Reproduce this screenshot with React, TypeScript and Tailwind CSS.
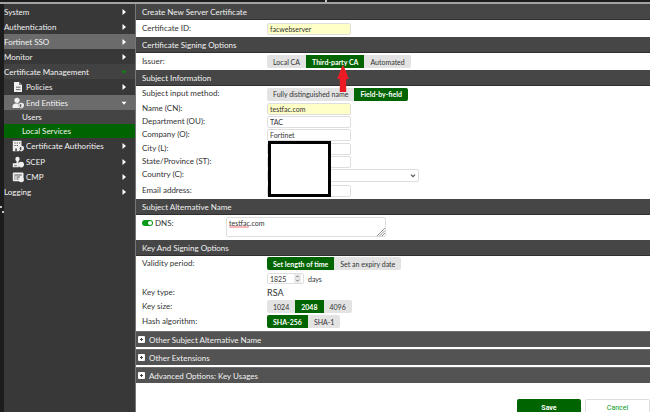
import type { ReactNode } from 'react';
import clsx from 'clsx';

function PoliciesIcon() {
    return (
        <svg viewBox="0 0 12 12" className="h-3 w-3" aria-hidden="true">
            <path fill="#f0f0f0" d="M2 1h5.1L10 3.9V11H2z" />
            <path fill="#777" d="M7 1v3h3z" />
            <path stroke="#444" strokeWidth="0.8" d="M4 6.2h4.5M4 8.6h4.5" />
        </svg>
    );
}

function EntitiesIcon() {
    return (
        <svg viewBox="0 0 12 12" className="h-3 w-3" aria-hidden="true">
            <circle cx="5" cy="3.3" r="2.6" fill="#f0f0f0" />
            <path fill="#f0f0f0" d="M.6 11V9.2C.6 7.5 2 6.4 3.5 6.4h2.8L7 11z" />
            <path fill="#f0f0f0" d="M9.2 5.6l2.7 1.2v1.8c0 1.5-1.2 2.5-2.7 3-1.500-.5-2.700-1.500-2.700-3V6.800z" />
            <path fill="#5f5f5f" d="M9.300 6.800v3.800c-1-.4-1.600-1-1.600-2V7.500z" />
        </svg>
    );
}

function AuthoritiesIcon() {
    return (
        <svg viewBox="0 0 12 12" className="h-3 w-3" aria-hidden="true">
            <path fill="#f0f0f0" d="M.8.8h8.700v5L7 7v4.200H.8z" />
            <path fill="#444" d="M2.400 2.400h1.200v1.200H2.400zM4.700 2.400h1.200v1.200H4.700zM7 2.400h1.200v1.200H7zM2.400 4.900h1.200v1.200H2.400zM4.700 4.900h1.200v1.200H4.700zM3.300 8.500h1.500v2.700H3.300z" />
            <path fill="#f0f0f0" d="M9.200 5.600l2.700 1.200v1.800c0 1.500-1.200 2.500-2.700 3-1.500-.5-2.700-1.500-2.700-3V6.800z" />
            <path fill="#444" d="M9.300 6.800v3.800c-1-.4-1.600-1-1.600-2V7.500z" />
        </svg>
    );
}

function ScepIcon() {
    return (
        <svg viewBox="0 0 12 12" className="h-3 w-3" aria-hidden="true">
            <circle cx="5.5" cy="3" r="2.2" fill="#f0f0f0" />
            <path fill="#f0f0f0" d="M4.5 5h2v2.500h-2zM.8 7.200h6v4h-6z" />
            <circle cx="9.200" cy="8.600" r="2.800" fill="#f0f0f0" />
            <path stroke="#444" strokeWidth="0.700" d="M2 9.800h3" />
        </svg>
    );
}

function CmpIcon() {
    return (
        <svg viewBox="0 0 12 12" className="h-3 w-3" aria-hidden="true">
            <rect x=".8" y="1.400" width="10.700" height="8.800" rx="1" fill="#f0f0f0" />
            <path stroke="#444" strokeWidth="0.900" d="M2.300 4h7.500M2.300 6h1.200M4.500 6H8M2.300 8h1.200M4.500 8h2" />
            <circle cx="9.300" cy="8.800" r="2.500" fill="#f0f0f0" />
        </svg>
    );
}

interface MenuItem {
    label: string;
    className: string;
    icon?: ReactNode;
    arrow?: 'right' | 'down' | 'active';
}

const menu: MenuItem[] = [
    { label: 'System', className: 'h-[15px]', arrow: 'right' },
    { label: 'Authentication', className: 'h-[15px]', arrow: 'right' },
    { label: 'Fortinet SSO', className: 'h-[15px] bg-[#6b6b6b]', arrow: 'right' },
    { label: 'Monitor', className: 'h-[15px]', arrow: 'right' },
    { label: 'Certificate Management', className: 'h-[15px] bg-[#424242]', arrow: 'active' },
    { label: 'Policies', className: 'h-4 pl-2', icon: <PoliciesIcon />, arrow: 'right' },
    { label: 'End Entities', className: 'h-[15px] pl-2 bg-[#6b6b6b]', icon: <EntitiesIcon />, arrow: 'down' },
    { label: 'Users', className: 'h-3.5 pl-[18px] bg-[#444444]' },
    { label: 'Local Services', className: 'h-3.5 pl-[18px] bg-[#006400]' },
    { label: 'Certificate Authorities', className: 'h-4 pl-2', icon: <AuthoritiesIcon />, arrow: 'right' },
    { label: 'SCEP', className: 'h-[15px] pl-2', icon: <ScepIcon />, arrow: 'right' },
    { label: 'CMP', className: 'h-[15px] pl-2', icon: <CmpIcon />, arrow: 'right' },
    { label: 'Logging', className: 'h-4', arrow: 'right' },
];

function Caret({ kind }: { kind: 'right' | 'down' | 'active' }) {
    return (
        <svg viewBox="0 0 6 6" className="ml-auto h-1.5 w-1.5" aria-hidden="true">
            {kind === 'right' ? (
                <path fill="#fff" d="M1.5 0L5 3 1.5 6z" />
            ) : (
                <path fill={kind === 'active' ? '#0a8a0a' : '#fff'} d="M.5 1.8h5L3 4.8z" />
            )}
        </svg>
    );
}

function Sidebar() {
    return (
        <nav className="w-[135px] shrink-0 border-l-4 border-[#1c1c1c] bg-[#383838]">
            {menu.map((item) => (
                <a
                    key={item.label}
                    href="#"
                    className={clsx('flex items-center gap-0.5 pr-2 whitespace-nowrap text-[#f2f2f2]', item.className)}
                >
                    {item.icon}
                    {item.label}
                    {item.arrow && <Caret kind={item.arrow} />}
                </a>
            ))}
        </nav>
    );
}

function Heading({ children }: { children: ReactNode }) {
    return (
        <h2 className="flex h-4 items-center border-b border-[#2f2f2f] bg-[#464646] pl-1.5 text-[#f2f2f2]">
            {children}
        </h2>
    );
}

function Row({ label, htmlFor, className, children }: { label: string; htmlFor?: string; className: string; children?: ReactNode }) {
    return (
        <div className={clsx('flex items-center pl-1.5', className)}>
            <label htmlFor={htmlFor} className="w-[125px] shrink-0 pb-0.5">
                {label}
            </label>
            {children}
        </div>
    );
}

function Segments({ options, selected }: { options: string[]; selected: string }) {
    return (
        <div className="flex h-[13px] overflow-hidden rounded-xs text-[7px]">
            {options.map((option) => (
                <button
                    key={option}
                    type="button"
                    aria-pressed={option === selected}
                    className={clsx(
                        'px-1.5 whitespace-nowrap',
                        option === selected ? 'bg-[#006400] font-bold text-white' : 'bg-[#e3e3e3] text-[#333]',
                    )}
                >
                    {option}
                </button>
            ))}
        </div>
    );
}

function TextField({ id, value = '', filled }: { id: string; value?: string; filled?: boolean }) {
    return (
        <input
            id={id}
            type="text"
            defaultValue={value}
            className={clsx(
                'h-3 w-[84px] rounded-xs border border-[#dedede] px-0.5 text-[7px] text-[#333]',
                filled ? 'bg-[#ffffc8]' : 'bg-white',
            )}
        />
    );
}

function Collapsed({ title }: { title: string }) {
    return (
        <button
            type="button"
            className="flex h-4 w-full items-center gap-1 border-t border-[#6c6c6c] bg-[#535353] pl-0.5 text-[#f2f2f2]"
        >
            <svg viewBox="0 0 7 7" className="h-[7px] w-[7px]" aria-hidden="true">
                <rect width="7" height="7" rx="1" fill="#fff" />
                <path stroke="#444" d="M2 3.5h3M3.5 2v3" />
            </svg>
            {title}
        </button>
    );
}

export default function App() {
    return (
        <div className="relative flex h-screen flex-col overflow-hidden bg-white font-['Lato',sans-serif] text-[8px] leading-3 text-[#333]">
            <div className="h-1 shrink-0 border-t-2 border-b-2 border-t-[#1c1c1c] border-b-[#a3a3a3]" />
            <div className="flex min-h-0 flex-1">
                <Sidebar />
                <form className="relative min-w-0 flex-1 border-l border-[#777]">
                    <Heading>Create New Server Certificate</Heading>
                    <Row label="Certificate ID:" htmlFor="cert-id" className="h-[17px]">
                        <TextField id="cert-id" value="facwebserver" filled />
                    </Row>
                    <Heading>Certificate Signing Options</Heading>
                    <Row label="Issuer:" className="h-[17px]">
                        <Segments options={['Local CA', 'Third-party CA', 'Automated']} selected="Third-party CA" />
                    </Row>
                    <Heading>Subject Information</Heading>
                    <Row label="Subject input method:" className="h-4">
                        <Segments options={['Fully distinguished name', 'Field-by-field']} selected="Field-by-field" />
                    </Row>
                    <Row label="Name (CN):" htmlFor="cn" className="h-[13px]">
                        <TextField id="cn" value="testfac.com" filled />
                    </Row>
                    <Row label="Department (OU):" htmlFor="ou" className="h-[13px]">
                        <TextField id="ou" value="TAC" />
                    </Row>
                    <Row label="Company (O):" htmlFor="org" className="h-[14px]">
                        <TextField id="org" value="Fortinet" />
                    </Row>
                    <Row label="City (L):" htmlFor="city" className="h-[13px]">
                        <TextField id="city" />
                    </Row>
                    <Row label="State/Province (ST):" htmlFor="state" className="h-[13px]">
                        <TextField id="state" />
                    </Row>
                    <Row label="Country (C):" htmlFor="country" className="h-[14px]">
                        <div className="relative">
                            <select
                                id="country"
                                className="block h-[13px] w-[152px] appearance-none rounded-xs border border-[#dedede] bg-white text-[7px]"
                            />
                            <svg viewBox="0 0 6 4" className="pointer-events-none absolute top-[5px] right-[3px] h-1 w-1.5" aria-hidden="true">
                                <path fill="none" stroke="#555" strokeWidth="1.2" d="M1 .6l2 2 2-2" />
                            </svg>
                        </div>
                    </Row>
                    <Row label="Email address:" htmlFor="email" className="h-[17px]">
                        <TextField id="email" />
                    </Row>
                    <Heading>Subject Alternative Name</Heading>
                    <div className="flex h-[25px] items-start pt-0.5 pl-1.5">
                        <label className="flex w-[84px] items-center gap-0.5">
                            <input type="checkbox" defaultChecked className="peer sr-only" />
                            <span className="flex h-1.5 w-[11px] items-center justify-end rounded-full bg-[#0a9a1a] p-px">
                                <span className="h-1 w-1 rounded-full bg-white" />
                            </span>
                            DNS:
                        </label>
                        <div className="relative">
                            <textarea
                                aria-label="DNS"
                                spellCheck={false}
                                defaultValue="testfac.com"
                                className="block h-5 w-40 resize-none overflow-hidden rounded-xs border border-[#dedede] px-0.5 text-[7px] leading-[10px] text-[#333]"
                            />
                            <svg viewBox="0 0 20 2" className="pointer-events-none absolute top-[9px] left-[3px] h-0.5 w-5" aria-hidden="true">
                                <path fill="none" stroke="#e33" strokeWidth="0.8" d="M0 1.5l1-1 1 1 1-1 1 1 1-1 1 1 1-1 1 1 1-1 1 1 1-1 1 1 1-1 1 1 1-1 1 1 1-1 1 1 1-1 1 1" />
                            </svg>
                            <svg viewBox="0 0 8 8" className="pointer-events-none absolute right-px bottom-px h-2 w-2" aria-hidden="true">
                                <path stroke="#777" strokeWidth="0.8" d="M0 8l8-8M2.5 8L8 2.5M5 8l3-3" />
                            </svg>
                        </div>
                    </div>
                    <Heading>Key And Signing Options</Heading>
                    <Row label="Validity period:" className="h-[15px]">
                        <Segments options={['Set length of time', 'Set an expiry date']} selected="Set length of time" />
                    </Row>
                    <div className="flex h-[15px] items-center gap-1 pl-[131px] text-[7px]">
                        <div className="relative">
                            <input
                                id="days"
                                type="text"
                                inputMode="numeric"
                                defaultValue="1825"
                                className="block h-[11px] w-[37px] rounded-xs border border-[#dedede] px-0.5 text-[#333]"
                            />
                            <svg viewBox="0 0 7 9" className="pointer-events-none absolute top-px right-[3px] h-[9px] w-[7px]" aria-hidden="true">
                                <path fill="#ebebeb" d="M0 0h7v9H0z" />
                                <path fill="none" stroke="#666" strokeWidth="0.9" d="M2 3.3l1.5-1.5L5 3.3M2 5.7l1.5 1.5L5 5.7" />
                            </svg>
                        </div>
                        <label htmlFor="days">days</label>
                    </div>
                    <Row label="Key type:" className="h-[13px]">
                        <span className="text-[9px]">RSA</span>
                    </Row>
                    <Row label="Key size:" className="h-[15px]">
                        <Segments options={['1024', '2048', '4096']} selected="2048" />
                    </Row>
                    <Row label="Hash algorithm:" className="h-[15px]">
                        <Segments options={['SHA-256', 'SHA-1']} selected="SHA-256" />
                    </Row>
                    <div className="flex flex-col gap-0.5 pt-0.5">
                        <Collapsed title="Other Subject Alternative Name" />
                        <Collapsed title="Other Extensions" />
                        <Collapsed title="Advanced Options: Key Usages" />
                    </div>
                    <div className="mt-4 flex justify-end gap-1 font-[Roboto,sans-serif] text-[7px] leading-2">
                        <button type="submit" className="h-[18px] w-16 rounded-xs bg-[#006400] font-bold text-white">
                            Save
                        </button>
                        <button type="button" className="h-[18px] w-[65px] rounded-xs border border-[#dedede] bg-white text-[#0a9a1a]">
                            Cancel
                        </button>
                    </div>

                    {/* markup drawn over the form */}
                    <svg viewBox="0 0 12 28" className="absolute top-[61px] left-[201px] h-7 w-3" aria-hidden="true">
                        <path fill="#ed1c24" d="M5.5.5h1L11.8 14H9.2v13H2.8V14H.2z" />
                    </svg>
                    <div className="absolute top-[137px] left-[132px] h-14 w-[63px] border-[3px] border-black bg-white" />
                </form>
            </div>
            <span className="absolute top-0 left-1/2 h-0.5 w-0.5 rounded-full bg-white" />
            <span className="absolute top-[206px] left-0 h-0.5 w-0.5 rounded-full bg-white" />
            <span className="absolute top-[211px] left-0.5 h-0.5 w-0.5 rounded-full bg-white" />
        </div>
    );
}
